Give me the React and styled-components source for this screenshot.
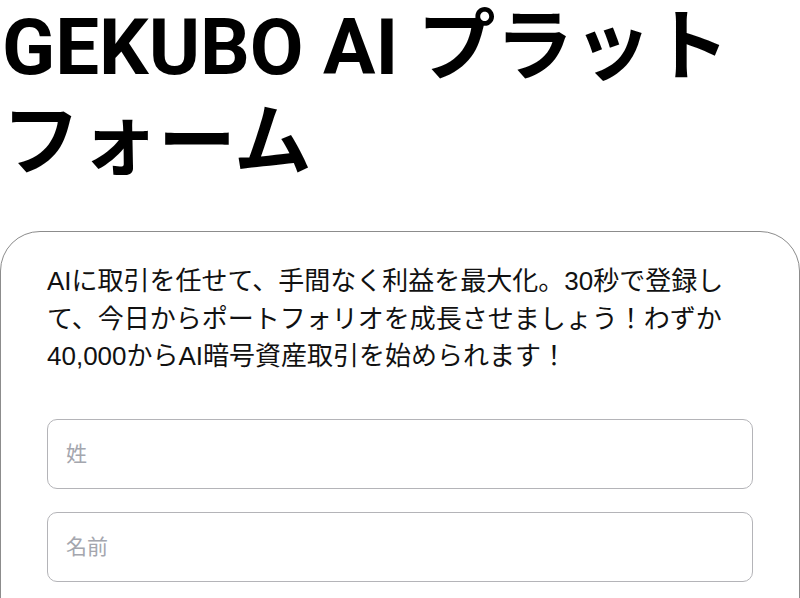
import React from "react";
import styled, { createGlobalStyle } from "styled-components";

const GlobalStyle = createGlobalStyle`
  html, body {
    margin: 0;
    padding: 0;
    background: #ffffff;
  }
  body {
    font-family: "Liberation Sans", "Noto Sans CJK JP", sans-serif;
    color: #000;
    overflow: hidden;
  }
`;

const Page = styled.main`
  display: flex;
  flex-direction: column;
  width: 800px;
`;

const Title = styled.h1`
  margin: 0;
  padding: 0 0 0 2px;
  font-family: Roboto, "Noto Sans CJK JP", sans-serif;
  font-weight: 700;
  font-size: 78px;
  line-height: 95px;
  color: #000;
`;

const Card = styled.section`
  margin-top: 41px;
  border: 1.5px solid #8c8c8c;
  border-radius: 40px;
  padding: 31px 46px 40px 46px;
  display: flex;
  flex-direction: column;
  gap: 23px;
`;

const Lead = styled.p`
  margin: 0 0 20px 0;
  font-family: "Liberation Sans", "Noto Sans CJK JP", sans-serif;
  font-size: 26px;
  line-height: 37.5px;
  color: #111;
`;

const Field = styled.input`
  box-sizing: border-box;
  width: 100%;
  height: 70px;
  border: 1.5px solid #b4b4b8;
  border-radius: 10px;
  padding: 0 18px;
  font-family: "Liberation Sans", "Noto Sans CJK JP", sans-serif;
  font-size: 21px;
  color: #111;
  background: #fff;
  outline: none;

  &::placeholder {
    color: #a4a6ae;
  }
`;

export default function App() {
  return (
    <>
      <GlobalStyle />
      <Page>
        <Title>GEKUBO AI プラットフォーム</Title>
        <Card>
          <Lead>
            AIに取引を任せて、手間なく利益を最大化。30秒で登録して、今日からポートフォリオを成長させましょう！わずか40,000からAI暗号資産取引を始められます！
          </Lead>
          <Field type="text" placeholder="姓" />
          <Field type="text" placeholder="名前" />
          <Field type="email" placeholder="メールアドレス" />
        </Card>
      </Page>
    </>
  );
}
